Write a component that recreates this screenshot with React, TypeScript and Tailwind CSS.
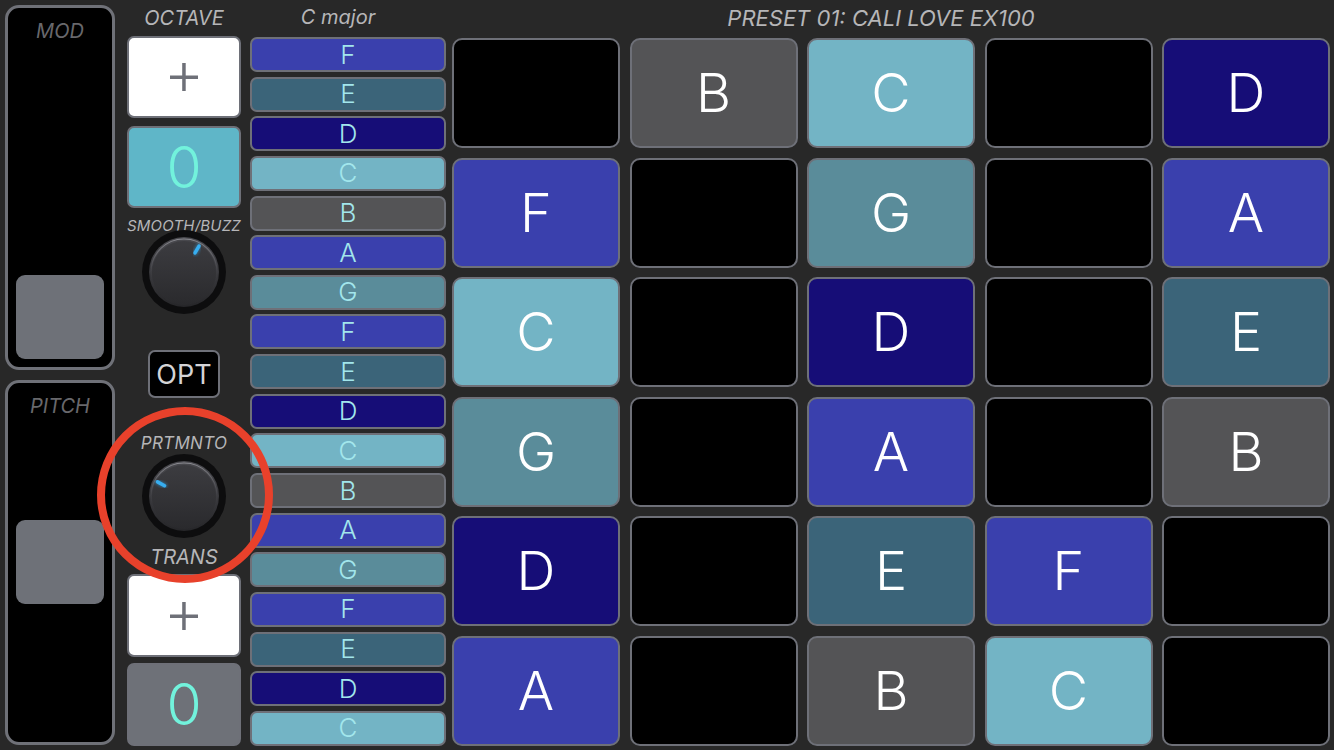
import React from "react";

const C = {
  F: "#3a40ad",
  E: "#3b6479",
  D: "#160d77",
  C: "#73b4c5",
  B: "#545456",
  A: "#3a40ad",
  G: "#5a8c9a",
} as Record<string, string>;

const scale = ["F", "E", "D", "C", "B", "A", "G", "F", "E", "D", "C", "B", "A", "G", "F", "E", "D", "C"];

const grid: (string | null)[][] = [
  [null, "B", "C", null, "D"],
  ["F", null, "G", null, "A"],
  ["C", null, "D", null, "E"],
  ["G", null, "A", null, "B"],
  ["D", null, "E", "F", null],
  ["A", null, "B", "C", null],
];

const font = { fontFamily: "Inter, 'Noto Sans', sans-serif" };

function Knob({ angle, id }: { angle: number; id: string }) {
  const rad = (angle * Math.PI) / 180;
  const x1 = 45 + Math.sin(rad) * 22;
  const y1 = 45 - Math.cos(rad) * 22;
  const x2 = 45 + Math.sin(rad) * 30;
  const y2 = 45 - Math.cos(rad) * 30;
  return (
    <svg width="90" height="90" viewBox="0 0 90 90" className="block">
      <defs>
        <linearGradient id={`body${id}`} x1="0" y1="0" x2="0" y2="1">
          <stop offset="0" stopColor="#4a4a4f" />
          <stop offset="1" stopColor="#262629" />
        </linearGradient>
        <linearGradient id={`face${id}`} x1="0" y1="0" x2="0" y2="1">
          <stop offset="0" stopColor="#3c3c40" />
          <stop offset="1" stopColor="#2a2a2d" />
        </linearGradient>
        <linearGradient id={`rim${id}`} x1="0" y1="0" x2="0" y2="1">
          <stop offset="0" stopColor="#8a8a90" />
          <stop offset="0.6" stopColor="#3a3a3e" stopOpacity="0.4" />
          <stop offset="1" stopColor="#222" stopOpacity="0" />
        </linearGradient>
        <filter id={`glow${id}`} x="-50%" y="-50%" width="200%" height="200%">
          <feGaussianBlur stdDeviation="1.5" />
        </filter>
      </defs>
      <circle cx="45" cy="45" r="42" fill="#0d0d0e" />
      <circle cx="45" cy="45" r="35" fill={`url(#body${id})`} />
      <circle cx="45" cy="46" r="32" fill={`url(#face${id})`} />
      <circle cx="45" cy="45" r="33" fill="none" stroke={`url(#rim${id})`} strokeWidth="1.2" />
      <line x1={x1} y1={y1} x2={x2} y2={y2} stroke="#2fa8f0" strokeWidth="5" strokeLinecap="round" opacity="0.5" filter={`url(#glow${id})`} />
      <line x1={x1} y1={y1} x2={x2} y2={y2} stroke="#38aef0" strokeWidth="3.5" strokeLinecap="round" />
    </svg>
  );
}

function Plus({ h }: { h: string }) {
  return (
    <div className={`${h} shrink-0 w-full rounded-[7px] border-2 border-[#6e7078] bg-white flex items-center justify-center`}>
      <svg width="28" height="28" viewBox="0 0 28 28">
        <rect x="0" y="12.5" width="28" height="3.5" fill="#6e7078" />
        <rect x="12.2" y="0" width="3.5" height="28" fill="#6e7078" />
      </svg>
    </div>
  );
}

function Zero({ bg, h }: { bg: string; h: string }) {
  return (
    <div
      className={`${h} shrink-0 w-full rounded-[7px] border-2 border-[#6e7078] flex items-center justify-center text-[57px] font-light text-[#72f2dc] leading-none`}
      style={{ backgroundColor: bg }}
    >
      0
    </div>
  );
}

function Strip({ label, thumbClass }: { label: string; thumbClass: string }) {
  return (
    <div className="relative shrink-0 h-[365px] w-[110px] rounded-[14px] border-[3px] border-[#6f7178] bg-black flex flex-col items-center">
      <div className="mt-[13px] text-[20px] italic leading-none text-[#68686c]">{label}</div>
      <div className={`absolute left-[8px] w-[88px] h-[84px] rounded-[9px] bg-[#6e7178] ${thumbClass}`} />
    </div>
  );
}

export default function App() {
  return (
    <div className="relative w-[1334px] h-[750px] bg-[#282828] overflow-hidden flex" style={font}>
      {/* Column 1 */}
      <div className="ml-[5px] mt-[5px] flex flex-col gap-[10px]">
        <Strip label="MOD" thumbClass="top-[267px]" />
        <Strip label="PITCH" thumbClass="top-[137px]" />
      </div>

      {/* Column 2 */}
      <div className="ml-[12px] w-[114px] flex flex-col items-center">
        <div className="h-[36px] shrink-0 flex items-center text-[20px] italic text-[#b6b6b8] leading-none">OCTAVE</div>
        <Plus h="h-[82px]" />
        <div className="h-[8px] shrink-0" />
        <Zero bg="#5fb6c8" h="h-[82px]" />
        <div className="mt-[10px] shrink-0 h-[15px] text-[15px] italic text-[#b6b6b8] leading-none tracking-[0.2px] whitespace-nowrap">SMOOTH/BUZZ</div>
        <div className="mt-[-6px] shrink-0">
          <Knob angle={30} id="a" />
        </div>
        <div className="mt-[33px] shrink-0 w-[72px] h-[48px] rounded-[7px] border-2 border-[#6e7078] bg-black flex items-center justify-center text-[27px] text-[#d4d4d6] leading-none">
          OPT
        </div>
        <div className="mt-[37px] shrink-0 h-[17px] text-[17px] italic text-[#b6b6b8] leading-none tracking-[0.3px]">PRTMNTO</div>
        <div className="mt-[-1px] shrink-0">
          <Knob angle={-62} id="b" />
        </div>
        <div className="mt-[6px] shrink-0 h-[20px] text-[20px] italic text-[#b6b6b8] leading-none">TRANS</div>
        <div className="h-[7px] shrink-0" />
        <Plus h="h-[83px]" />
        <div className="h-[6px] shrink-0" />
        <Zero bg="#6e7178" h="h-[83px]" />
      </div>

      {/* Column 3 - scale */}
      <div className="ml-[9px] w-[196px] flex flex-col">
        <div className="h-[37px] shrink-0 flex items-start pt-[7px] pr-[20px] justify-center text-[20px] italic text-[#b6b6b8] leading-none">C major</div>
        <div className="h-[709px] shrink-0 flex flex-col justify-between">
          {scale.map((n, i) => (
            <div
              key={i}
              className="h-[35px] shrink-0 rounded-[7px] border-2 border-[#6e7078] flex items-center justify-center text-[26px] font-light leading-none text-[#a2e6ec]"
              style={{ backgroundColor: C[n] }}
            >
              {n}
            </div>
          ))}
        </div>
      </div>

      {/* Grid */}
      <div className="ml-[6px] w-[878px] flex flex-col">
        <div className="h-[38px] shrink-0 flex items-start pt-[7px] pr-[20px] justify-center text-[22px] italic text-[#b6b6b8] leading-none">
          PRESET 01: CALI LOVE EX100
        </div>
        <div className="h-[708px] shrink-0 grid grid-cols-5 grid-rows-6 gap-x-[9.5px] gap-y-[9.6px]">
          {grid.flatMap((row, r) =>
            row.map((n, c) => (
              <div
                key={`${r}-${c}`}
                className="rounded-[10px] border-2 border-[#6e7078] flex items-center justify-center text-[54px] font-light text-white leading-none"
                style={{ backgroundColor: n ? C[n] : "#000" }}
              >
                {n ?? ""}
              </div>
            ))
          )}
        </div>
      </div>

      {/* Red annotation circle */}
      <div className="absolute left-[97px] top-[407px] w-[176px] h-[176px] rounded-full border-[8px] border-[#e8412b]" />
    </div>
  );
}
